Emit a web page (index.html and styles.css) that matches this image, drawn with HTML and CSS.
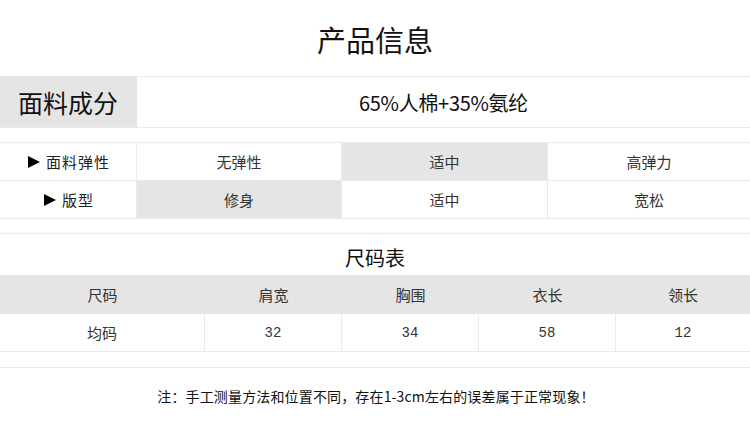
FILE: index.html
```html
<!DOCTYPE html>
<html lang="zh">
<head>
<meta charset="utf-8">
<link rel="stylesheet" href="styles.css">
</head>
<body>
<div class="page">
  <div class="title">产品信息</div>

  <div class="fabric">
    <div class="fabric-label">面料成分</div>
    <div class="fabric-value">65%人棉+35%氨纶</div>
  </div>

  <div class="attrs">
    <div class="attr-row">
      <div class="cell label"><span class="tri"></span>面料弹性</div>
      <div class="cell">无弹性</div>
      <div class="cell on">适中</div>
      <div class="cell last">高弹力</div>
    </div>
    <div class="attr-row">
      <div class="cell label"><span class="tri"></span>版型</div>
      <div class="cell on">修身</div>
      <div class="cell">适中</div>
      <div class="cell last">宽松</div>
    </div>
  </div>

  <div class="sizes">
    <div class="sizes-title">尺码表</div>
    <div class="size-row head">
      <div class="scell">尺码</div>
      <div class="scell">肩宽</div>
      <div class="scell">胸围</div>
      <div class="scell">衣长</div>
      <div class="scell">领长</div>
    </div>
    <div class="size-row data">
      <div class="scell">均码</div>
      <div class="scell num">32</div>
      <div class="scell num">34</div>
      <div class="scell num">58</div>
      <div class="scell num last">12</div>
    </div>
  </div>

  <div class="note">注：手工测量方法和位置不同，存在1-3cm左右的误差属于正常现象！</div>
</div>
</body>
</html>
```

FILE: styles.css
```css
* { box-sizing: border-box; }
html, body { margin: 0; padding: 0; background: #fff; }
body {
  width: 750px;
  font-family: "Noto Sans CJK SC", "Noto Sans", sans-serif;
  color: #333;
}
.page { width: 750px; }

.title {
  height: 76px;
  display: flex;
  align-items: center;
  justify-content: center;
  font-size: 29px;
  color: #111;
  padding-top: 2px;
}

.fabric {
  display: grid;
  grid-template-columns: 137px 1fr;
  height: 52px;
  border-top: 1px solid #ebebeb;
  border-bottom: 1px solid #ebebeb;
}
.fabric-label {
  background: #e5e5e5;
  display: flex;
  align-items: center;
  justify-content: center;
  font-size: 25px;
  color: #111;
  padding-right: 1px;
}
.fabric-value {
  display: flex;
  align-items: center;
  justify-content: center;
  font-size: 20px;
  color: #111;
  letter-spacing: -0.3px;
}

.attrs {
  margin-top: 14px;
  border-top: 1px solid #ebebeb;
}
.attr-row {
  display: grid;
  grid-template-columns: 137px 205px 206px 1fr;
  height: 38px;
  border-bottom: 1px solid #ebebeb;
}
.cell {
  display: flex;
  align-items: center;
  justify-content: center;
  font-size: 15px;
  color: #333;
  border-right: 1px solid #ebebeb;
}
.cell.last { border-right: none; }
.cell.on { background: #e5e5e5; }
.cell.label { color: #222; letter-spacing: 1px; padding-left: 2px; }
.tri {
  display: inline-block;
  width: 0;
  height: 0;
  border-left: 12px solid #000;
  border-top: 6px solid transparent;
  border-bottom: 6px solid transparent;
  margin-right: 6px;
}

.sizes {
  margin-top: 14px;
  border-top: 1px solid #ebebeb;
  border-bottom: 1px solid #ebebeb;
}
.sizes-title {
  height: 41px;
  display: flex;
  align-items: center;
  justify-content: center;
  font-size: 20px;
  color: #111;
  padding-top: 5px;
}
.size-row {
  display: grid;
  grid-template-columns: 205px 137px 137px 137px 1fr;
}
.size-row.head { background: #e5e5e5; height: 39px; }
.size-row.data { height: 37px; }
.scell {
  display: flex;
  align-items: center;
  justify-content: center;
  font-size: 15px;
  color: #333;
}
.size-row.data .scell { border-right: 1px solid #ebebeb; }
.size-row.data .scell.last { border-right: none; }
.scell.num { font-family: "Liberation Mono", monospace; font-size: 14px; }

.note {
  margin-top: 15px;
  border-top: 1px solid #ebebeb;
  height: 56px;
  display: flex;
  align-items: center;
  justify-content: center;
  font-size: 14px;
  color: #111;
  padding-left: 2px;
  letter-spacing: 0.15px;
}
```
